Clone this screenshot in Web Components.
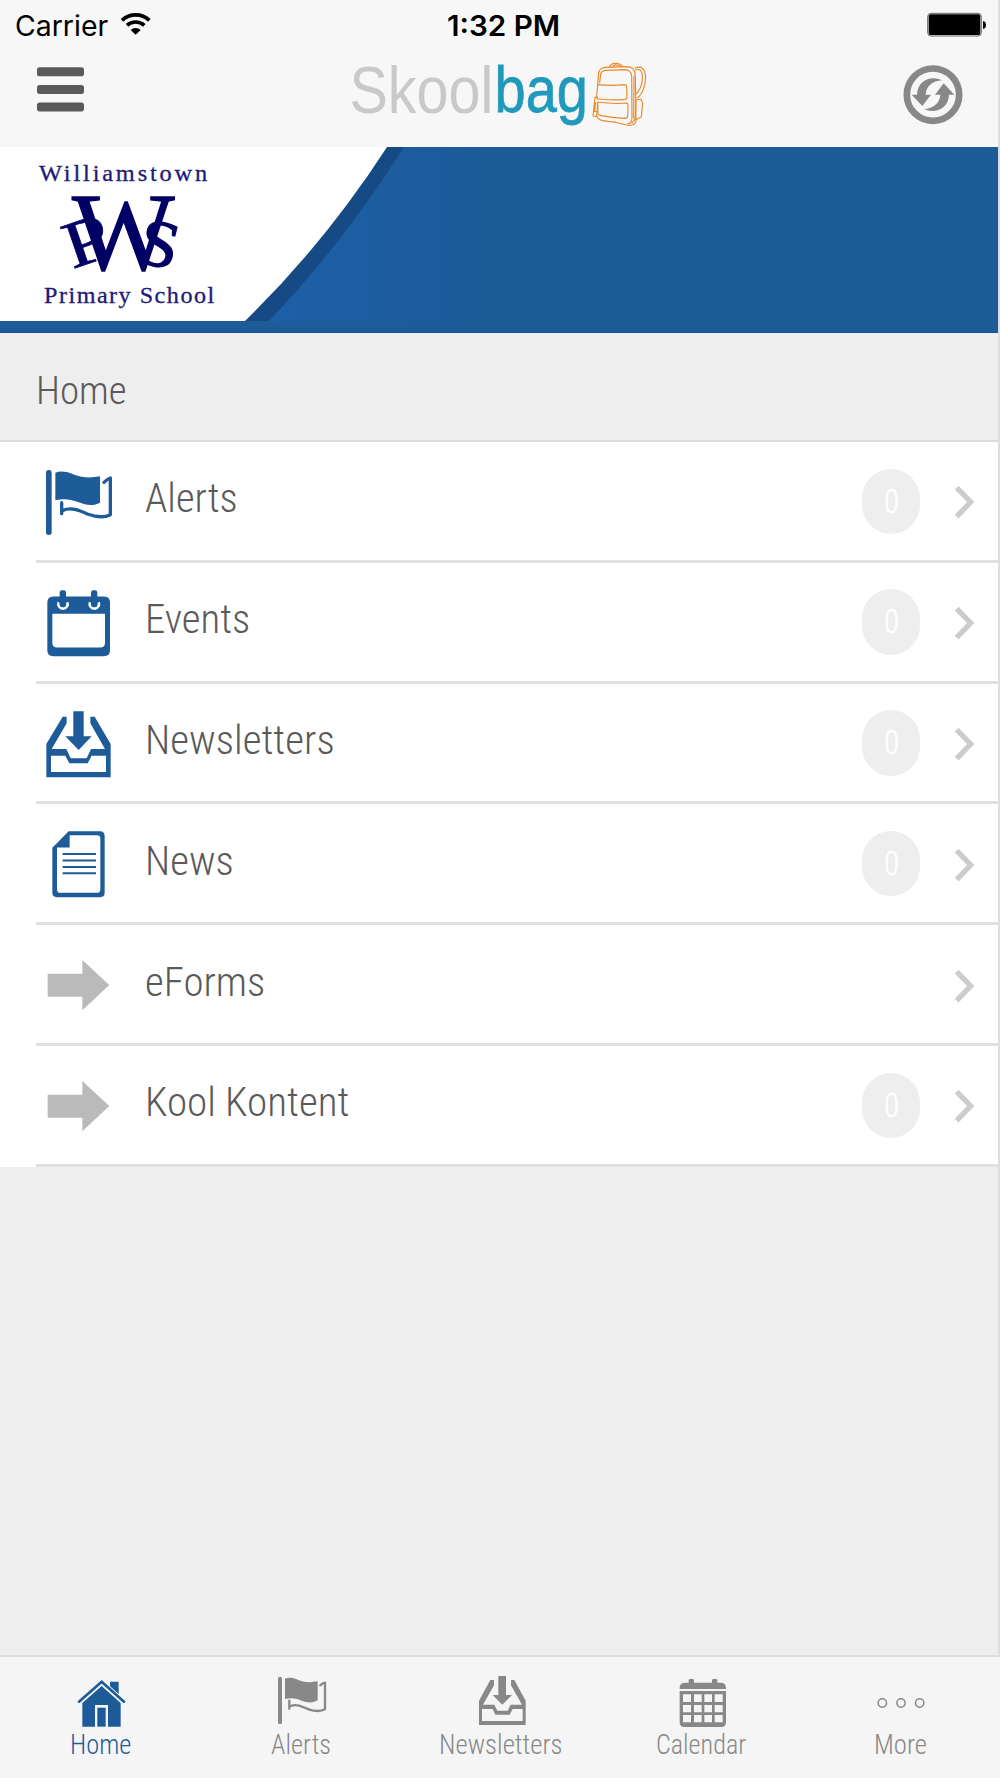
<!DOCTYPE html>
<html lang="en">
<head>
<meta charset="utf-8">
<title>Skoolbag</title>
<style>
html,body{margin:0;background:#eee}
body{width:1000px;height:1778px;overflow:hidden;font-family:Roboto,"Liberation Sans",sans-serif;color:#5a5a5a}
</style>
</head>
<body>
<skool-app></skool-app>
<script>
const define=(name,html,setup)=>customElements.define(name,class extends HTMLElement{
  connectedCallback(){
    if(this.shadowRoot)return;
    const root=this.attachShadow({mode:'open'});
    root.innerHTML=typeof html==='function'?html(this):html;
    if(setup)setup(this,root);
  }
});

const ctx=document.createElement('canvas').getContext('2d');
const FACES={
  light:s=>`condensed 300 ${s}px Roboto, "Liberation Sans", sans-serif`,
  status:s=>`400 ${s}px Inter, sans-serif`,
  clock:s=>`600 ${s}px Inter, sans-serif`,
  brand:s=>`400 ${s}px "Liberation Sans", sans-serif`,
  school:s=>`400 ${s}px "Liberation Serif", serif`
};
// One line of text: its ink spans "w" pixels and its baseline is the bottom of the box.
define('fit-text',`<style>:host{display:block;flex:none}svg{display:block;width:100%;height:100%;overflow:visible}text{fill:currentColor}</style><svg><text></text></svg>`,(el,root)=>{
  const n=k=>parseFloat(el.getAttribute(k)||0);
  const font=FACES[el.getAttribute('face')||'light'](n('size'));
  const t=root.querySelector('text');
  el.style.width=n('w')+'px';el.style.height=n('h')+'px';
  t.textContent=el.getAttribute('text');
  t.style.font=font;
  t.style.letterSpacing=n('spacing')+'px';
  if(n('stroke')){t.style.stroke='currentColor';t.style.strokeWidth=n('stroke')}
  ctx.font=font;ctx.letterSpacing=n('spacing')+'px';
  const m=ctx.measureText(t.textContent);
  const left=m.actualBoundingBoxLeft,ink=left+m.actualBoundingBoxRight;
  const k=n('w')/ink;
  t.setAttribute('transform',`translate(${left*k} ${n('h')}) scale(${k} 1)`);
});

const ICONS={
 flag:['135 84 204 204',`<rect x="138" y="90" width="17" height="195" rx="8"/><path d="M166 98C180 92 198 94 212 100C245 114 270 115 300 109V188C280 199 258 196 236 187C210 177 190 175 166 181Z"/><path d="M312 127C318 121 324 116 331 114V224C312 234 290 232 262 222C238 211 212 200 190 211M185 188V221" fill="none" stroke="currentColor" stroke-width="10" stroke-linecap="round" stroke-linejoin="round"/>`],
 events:['135 446.5 204 204',`<path fill-rule="evenodd" d="M160 469H312Q330 469 330 487V631Q330 648 312 648H160Q142 648 142 631V487Q142 469 160 469ZM157 521V608Q157 622 171 622H301Q315 622 315 608V521Z"/><path d="M176 486A14 14 0 1 0 202 486M270 486A14 14 0 1 0 296 486" fill="none" stroke="#fff" stroke-width="8"/><rect x="179" y="450" width="19" height="51" rx="7"/><rect x="273" y="450" width="19" height="51" rx="7"/>`],
 inbox:['135 89 204 204',`<path d="M220 93H251V168H275L236 209L196 168H220Z"/><path fill-rule="evenodd" d="M188 109H200V129L155 206H199L212 234H260L273 206H315L271 129V109H284L332 191V291H139V191ZM153 226V275H318V226H275L263 249H208L196 226Z"/>`],
 news:['135 451.5 204 204',`<path fill-rule="evenodd" d="M206 455H300Q314 455 314 470V639Q314 653 300 653H171Q157 653 157 639V505ZM209 467V504H171V629Q171 640 181 640H291Q301 640 301 629V477Q301 467 291 467Z"/><path d="M188 523.500H288M188 543H288M188 562.500H288M188 581.500H288" stroke="currentColor" stroke-width="6"/>`],
 arrow:['135 94 204 204',`<path d="M143 162H247V121L328 196L247 272V231H143Z"/>`],
 home:['210 96 180 180',`<path d="M247 189L305 138L362 189V260H324V195H285V260H247Z"/><rect x="292" y="203" width="25" height="57"/><path d="M330 125H356V166L330 145Z"/><path d="M237 186L305 126L372 186" fill="none" stroke="#f5f5f5" stroke-width="15"/><path d="M237 185L305 125L372 185" fill="none" stroke="currentColor" stroke-width="8" stroke-linecap="round"/>`],
 flagTab:['810 96 180 180',`<rect x="834" y="110" width="12" height="143" rx="6"/><path d="M855 116C865 111 878 113 888 117C912 128 930 128 953 124V181C938 190 922 188 905 182C886 174 873 173 855 177Z"/><path d="M961 136C966 131 970 129 975 128V208C960 216 944 214 926 208C906 199 890 191 872 198M868 182V206" fill="none" stroke="currentColor" stroke-width="7" stroke-linecap="round" stroke-linejoin="round"/>`],
 inboxTab:['330 96 180 180',`<path d="M415 108H438V165H456L427 194L398 165H415Z"/><path fill-rule="evenodd" d="M391 120H402V136L369 194H403L412 212H443L452 194H486L453 136V120H463L497 182V255H357V182ZM366 207V243H488V207H458L449 224H406L398 207Z"/>`],
 calendar:['90 96 180 180',`<path d="M119 147V142Q120 128 135 128H146V121Q146 117 150 117H158Q162 117 162 121V128H216V121Q216 117 220 117H228Q232 117 232 121V128H243Q257 128 258 142V147Z"/><path fill-rule="evenodd" d="M119 153H258V247Q258 261 244 261H133Q119 261 119 247ZM129 163V186H153V163ZM162 163V186H185V163ZM193 163V186H216V163ZM224 163V186H248V163ZM129 195V217H153V195ZM162 195V217H185V195ZM193 195V217H216V195ZM224 195V217H248V195ZM129 225V247H153V225ZM162 225V247H185V225ZM193 225V247H216V225ZM224 225V247H248V225Z"/>`],
 more:['690 96 180 180',`<g fill="none" stroke="currentColor" stroke-width="4.500"><circle cx="727" cy="189" r="12.500"/><circle cx="783" cy="189" r="12.500"/><circle cx="839" cy="189" r="12.500"/></g>`],
 wifi:['360 36 96 72',`<path d="M366 61A60 60 0 0 1 448 61M381 76A39 39 0 0 1 433 76" fill="none" stroke="currentColor" stroke-width="11"/><path d="M407 104L392 90A22 22 0 0 1 422 90Z"/>`],
 battery:['771 36 180 75',`<rect x="773" y="40" width="161" height="68" rx="10" fill="none" stroke="#666" stroke-width="3"/><rect x="776" y="43" width="155" height="62" rx="6"/><path d="M939 63Q948 65 948 75Q948 85 939 87Z"/>`],
 menu:['111 198 141 141',`<rect x="111" y="202" width="141" height="27" rx="8"/><rect x="111" y="255" width="141" height="27" rx="8"/><rect x="111" y="307.500" width="141" height="27" rx="8"/>`],
 sync:['699 195 180 180',`<circle cx="789" cy="284" r="78.500" fill="none" stroke="currentColor" stroke-width="20"/><path d="M725 284H741C742 251 767 235 790 235Q805 235 816 241C788 242 768 260 767 284H783L757 318Z"/><path d="M853 284H837C836 317 811 333 788 333Q773 333 762 327C790 326 810 308 811 284H795L821 250Z"/>`],
 pack:['753 183 168 198',`<g fill="none" stroke="currentColor" stroke-width="3.400" stroke-linejoin="round" stroke-linecap="round"><path d="M773 253L776 218Q779 203 796 202L860 200Q884 200 886 224L888 362Q887 376 867 376C845 376 835 364 805 364Q776 362 771 350"/><path d="M779 248L782 222Q784 212 798 211L855 209Q873 210 875 228L876 353Q875 371 864 371"/><path d="M809 201Q812 190 827 190Q842 191 848 200M816 201Q822 194 829 195Q838 196 841 200"/><path d="M886 204Q904 195 914 214Q921 235 911 265Q905 284 892 294M887 209Q902 204 906 220Q910 242 901 263Q896 276 889 281"/><path d="M773 254Q815 258 853 254Q861 254 860 262L861 293Q860 300 851 299Q812 301 776 297Q769 297 770 289Z"/><path d="M773 306Q819 313 860 309Q864 310 864 315L863 349Q862 356 855 355Q817 353 780 346Q774 345 774 340Z"/><path d="M773 292L765 291L759 348L770 350L773 310M767 308L763 334L772 335"/><path d="M887 300L902 297L908 309L904 351L887 359M888 300L886 352Q884 363 876 369M882 228L881 354"/></g>`],
 chevron:['405 166 60 102',`<path d="M410 174L452 217L410 261" fill="none" stroke="currentColor" stroke-width="16"/>`]
};
define('ui-icon',el=>{const i=ICONS[el.getAttribute('name')];
  return `<style>:host{display:block;flex:none}svg{display:block;width:100%;height:100%;fill:currentColor;overflow:visible}</style><svg viewBox="${i[0]}">${i[1]}</svg>`});

define('status-bar',`<style>
:host{display:flex;height:49px;color:#000;align-items:flex-start;padding:13px 11px 0 16px;box-sizing:border-box}
.text{margin-top:2px}ui-icon.wifi{width:32px;height:24px;margin:-1px 0 0 11px}
.clock{margin:2px 0 0 296.500px}.battery{width:60px;height:25px;margin:-1px 0 0 auto}
</style>
<fit-text class="text" face="status" text="Carrier" size="28.3" w="92.5" h="20.5"></fit-text>
<ui-icon class="wifi" name="wifi"></ui-icon>
<fit-text class="clock" face="clock" text="1:32 PM" size="28.3" w="111" h="20.5"></fit-text>
<ui-icon class="battery" name="battery"></ui-icon>`);

define('nav-header',`<style>
:host{display:flex;height:98px;align-items:flex-start;padding:0 35px 0 37px;box-sizing:border-box}
.menu{width:47px;height:47px;margin-top:17px}
.brand{display:flex;align-items:flex-start;margin-left:268px}
.brand fit-text{margin-top:15px}
.a{color:#c9c9c9}.b{color:#2099bd;margin-left:8px}
.pack{width:56px;height:66px;color:#e88a2b;margin:12px 0 0 6px}
.sync{width:60px;height:60px;color:#888;margin:16px 0 0 auto}
</style>
<ui-icon class="menu" name="menu"></ui-icon>
<div class="brand">
<fit-text class="a" face="brand" text="Skool" size="67" w="138" h="48.5"></fit-text>
<fit-text class="b" face="brand" text="bag" size="65.5" w="87" h="48" stroke=".8"></fit-text>
<ui-icon class="pack" name="pack"></ui-icon></div>
<ui-icon class="sync" name="sync"></ui-icon>`);

define('school-crest',`<style>
:host{display:flex;flex-direction:column;align-items:flex-start;color:#1f1a75}
.t{margin:18.500px 0 0 39px}.m{display:block;width:130px;height:86px;margin:10px 0 0 54px;overflow:visible}.b{margin:11.500px 0 0 44px}
text{font-family:"Liberation Serif",serif;fill:#000064;stroke:#000064;stroke-width:4px}
.w{font-size:332px}.p,.s{font-size:200px}.p{stroke-width:2px}
</style>
<fit-text class="t" face="school" text="Williamstown" size="22.5" w="168" h="15" spacing="2.6" stroke=".3"></fit-text>
<svg class="m" viewBox="162 153 390 258">
<text class="w" transform="translate(216 387)" textLength="308" lengthAdjust="spacingAndGlyphs">W</text>
<text class="p" transform="translate(217 388) rotate(-19)" textLength="136" lengthAdjust="spacingAndGlyphs">P</text>
<text class="s" transform="translate(405 362) rotate(14)" textLength="118" lengthAdjust="spacingAndGlyphs">S</text>
</svg>
<fit-text class="b" face="school" text="Primary School" size="22.5" w="170" h="15" spacing="1.4" stroke=".3"></fit-text>`);

define('school-banner',`<style>
:host{display:block;position:relative;height:186px;background:#1d5b99}
.bg{position:absolute;inset:0;width:100%;height:100%}
school-crest{position:relative}
</style>
<svg class="bg" viewBox="0 0 998 186" preserveAspectRatio="none"><defs><linearGradient id="g"><stop offset="0" stop-color="#1c60a8"/><stop offset="1" stop-color="#1d5b99"/></linearGradient></defs>
<path d="M269 174Q344 95 404 0H480V174Z" fill="url(#g)"/>
<path d="M245 174Q325 96 387 0H404Q344 95 269 174Z" fill="#154a84"/>
<path d="M0 0H387Q325 96 245 174H0Z" fill="#fff"/>
<path d="M0 185H998V186H0Z" fill="#14539b"/></svg>
<school-crest></school-crest>`);

define('section-title',`<style>:host{display:block;height:109px;box-sizing:border-box;padding:42.500px 0 0 39px;background:#eee;border-bottom:2px solid #ddd}</style>
<fit-text text="Home" size="38.5" w="86" h="27.500"></fit-text>`);

define('count-badge',`<style>:host{display:flex;flex:none;width:58px;height:65.500px;border-radius:29.500px;background:#eee;color:#fff;justify-content:center;align-items:flex-start;padding-top:20px;box-sizing:border-box}</style>
<fit-text text="0" size="33.5" w="13" h="23.800" stroke=".5"></fit-text>`);

define('menu-row',el=>{const a=k=>el.getAttribute(k);return `<style>
:host{display:flex;flex:1;background:#fff;padding-left:36px}
.row{flex:1;display:flex;align-items:flex-start;border-bottom:3px solid #e0e0e0}
.icon{width:68px;height:68px;margin:26px 0 0 9px;color:${a('icon')==='arrow'?'#bababa':'#1d5b99'}}
fit-text{margin:40.300px 0 0 ${a('x')-113}px}
.end{display:flex;margin-left:auto}
count-badge{margin:26.500px 35px 0 0}
.chev{width:20px;height:34px;margin:43.300px 23px 0 0;color:#ccc}
</style><div class="row"><ui-icon class="icon" name="${a('icon')}"></ui-icon>
<fit-text text="${a('label')}" size="41" w="${a('w')}" h="29.500"></fit-text>
<div class="end">${el.hasAttribute('plain')?'':'<count-badge></count-badge>'}<ui-icon class="chev" name="chevron"></ui-icon></div></div>`});

define('menu-list',`<style>:host{display:flex;flex-direction:column;height:725px}</style>
<menu-row icon="flag" label="Alerts" x="145.400" w="91.500"></menu-row>
<menu-row icon="events" label="Events" x="148" w="101"></menu-row>
<menu-row icon="inbox" label="Newsletters" x="148" w="185.500"></menu-row>
<menu-row icon="news" label="News" x="148" w="84.500"></menu-row>
<menu-row icon="arrow" label="eForms" x="146" w="118" plain></menu-row>
<menu-row icon="arrow" label="Kool Kontent" x="148" w="200.500"></menu-row>`);

define('tab-item',el=>{const a=k=>el.getAttribute(k);return `<style>
:host{display:flex;flex-direction:column;width:200px;align-items:center;color:${el.hasAttribute('active')?'#1d5b99':'#888'}}
ui-icon{width:60px;height:60px;margin-top:15px}
fit-text{margin:2.500px 0 0 ${a('dx')*2}px}
</style><ui-icon name="${a('icon')}"></ui-icon><fit-text text="${a('label')}" size="27" w="${a('w')}" h="19.200"></fit-text>`});

define('tab-bar',`<style>:host{display:flex;height:123px;box-sizing:border-box;background:#f5f5f5;border-top:2px solid #ddd}</style>
<tab-item icon="home" label="Home" w="59" dx="1" active></tab-item>
<tab-item icon="flagTab" label="Alerts" w="59" dx=".2"></tab-item>
<tab-item icon="inboxTab" label="Newsletters" w="120.5" dx="1.700"></tab-item>
<tab-item icon="calendar" label="Calendar" w="89" dx="1.800"></tab-item>
<tab-item icon="more" label="More" w="50.5" dx="1.6"></tab-item>`);

define('skool-app',`<style>
:host{display:flex;flex-direction:column;width:1000px;height:1778px}
main{flex:1;border-right:2px solid #ddd;background:#eee}
header{background:#f7f7f7;height:147px}
</style>
<main><header><status-bar></status-bar><nav-header></nav-header></header>
<school-banner></school-banner><section-title></section-title><menu-list></menu-list></main>
<tab-bar></tab-bar>`);
</script>
</body>
</html>
